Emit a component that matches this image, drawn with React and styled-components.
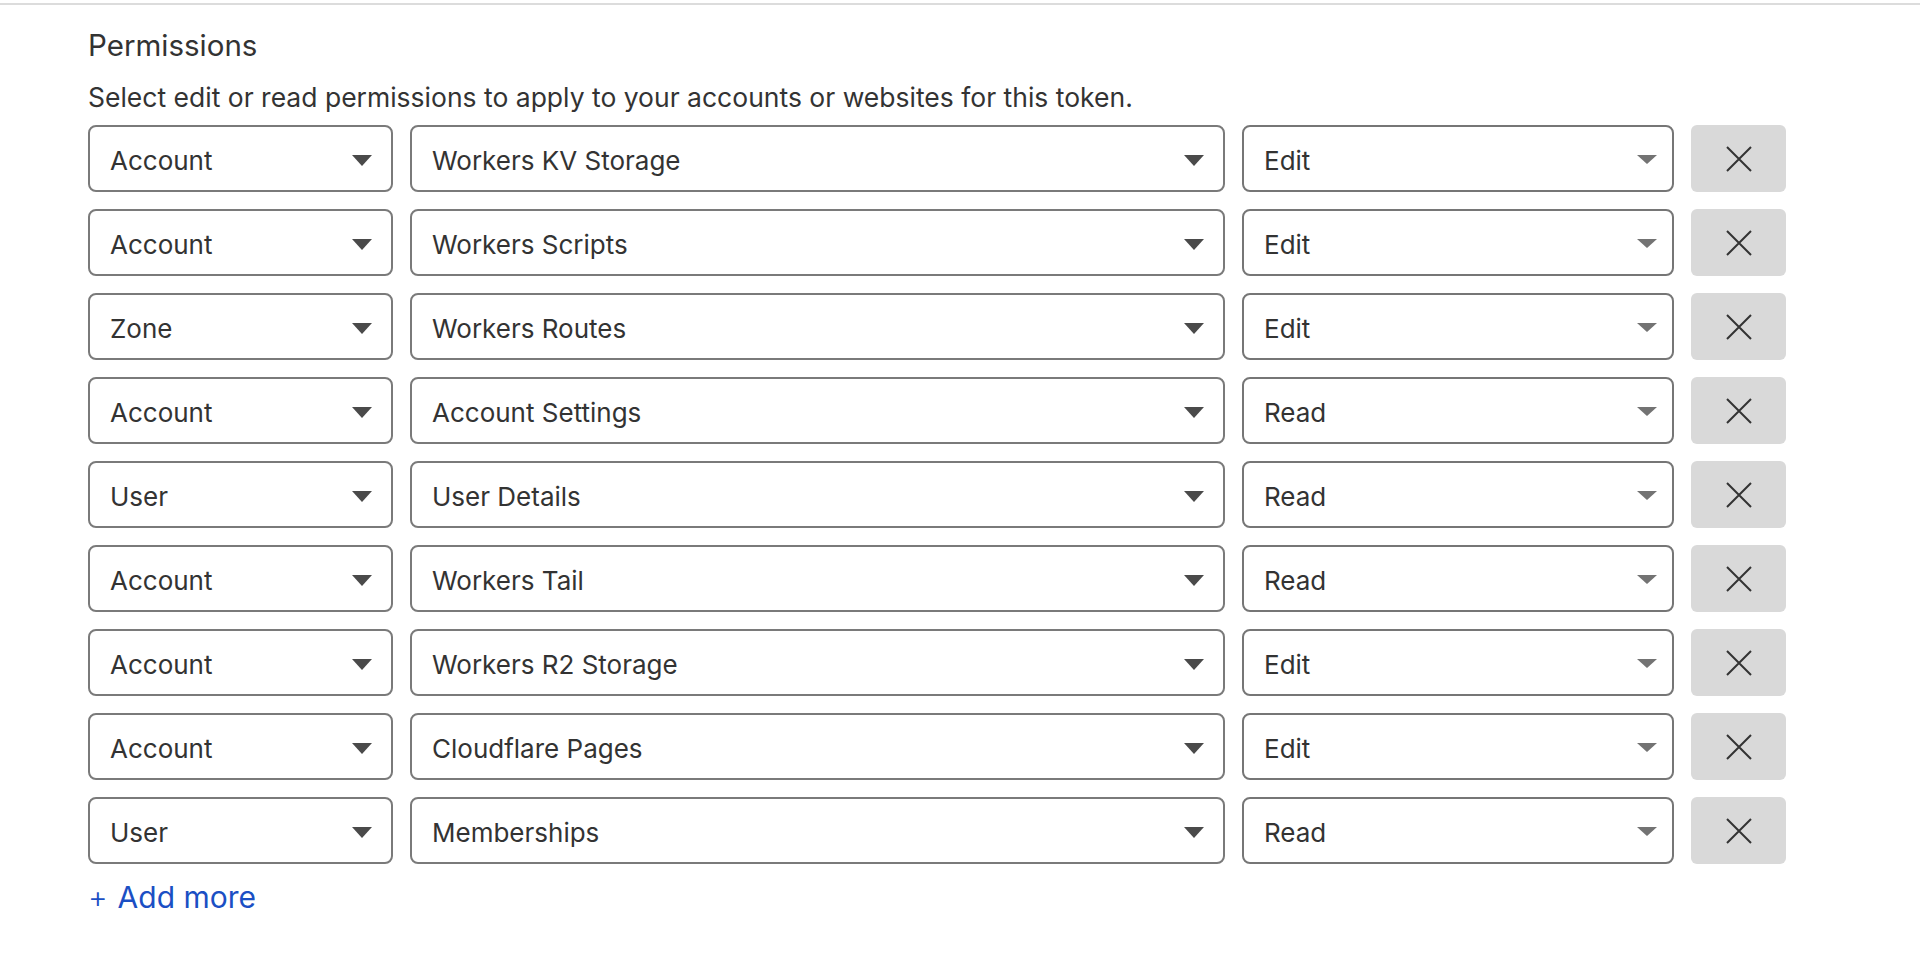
import React from "react";
import styled, { createGlobalStyle } from "styled-components";

const GlobalStyle = createGlobalStyle`
  html, body {
    margin: 0;
    padding: 0;
    background: #ffffff;
  }
  body {
    font-family: Inter, "Noto Sans", "Liberation Sans", sans-serif;
    color: #333333;
  }
`;

const Page = styled.div`
  border-top: 2px solid #dcdcdc;
  margin-top: 3px;
  padding: 20px 0 0 88px;
`;

const Title = styled.h2`
  margin: 0;
  font-size: 29.5px;
  font-weight: 400;
  line-height: 40px;
  color: #333;
`;

const Description = styled.p`
  margin: 16px 0 0;
  font-size: 26.5px;
  line-height: 32px;
  color: #333;
`;

const List = styled.div`
  margin-top: 12px;
  display: flex;
  flex-direction: column;
  gap: 17px;
`;

const Row = styled.div`
  display: grid;
  grid-template-columns: 305px 815px 432px 95px;
  column-gap: 17px;
  height: 67px;
`;

const Select = styled.div`
  box-sizing: border-box;
  height: 67px;
  border: 2px solid ${(p) => (p.$muted ? "#767676" : "#7a7a7a")};
  border-radius: 8px;
  display: flex;
  align-items: center;
  justify-content: space-between;
  padding: 0 ${(p) => (p.$muted ? "15px" : "19px")} 0 20px;
  font-size: 26px;
  color: #333;
  background: #fff;
`;

const Value = styled.span`
  padding-top: 4px;
`;

const Caret = styled.svg`
  flex: none;
  margin-top: 3px;
  display: block;
`;

const RemoveButton = styled.button`
  height: 67px;
  border: none;
  border-radius: 6px;
  background: #d9d9d9;
  display: flex;
  align-items: center;
  justify-content: center;
  padding: 0;
  cursor: pointer;
`;

const AddMore = styled.a`
  display: inline-flex;
  align-items: center;
  gap: 10px;
  margin-top: 13px;
  font-size: 30px;
  line-height: 40px;
  color: #1b4fc4;
  text-decoration: none;
  cursor: pointer;
`;

const Plus = styled.span`
  font-weight: 300;
`;

const rows = [
  ["Account", "Workers KV Storage", "Edit"],
  ["Account", "Workers Scripts", "Edit"],
  ["Zone", "Workers Routes", "Edit"],
  ["Account", "Account Settings", "Read"],
  ["User", "User Details", "Read"],
  ["Account", "Workers Tail", "Read"],
  ["Account", "Workers R2 Storage", "Edit"],
  ["Account", "Cloudflare Pages", "Edit"],
  ["User", "Memberships", "Read"],
];

const DarkCaret = () => (
  <Caret width="20" height="11" viewBox="0 0 20 11">
    <path d="M0 0 H20 L10 11 Z" fill="#4a4a4a" />
  </Caret>
);

const LightCaret = () => (
  <Caret width="20" height="10" viewBox="0 0 20 10">
    <path d="M0 0 H20 L10 9 Z" fill="#737373" />
  </Caret>
);

const CloseIcon = () => (
  <svg width="26" height="26" viewBox="0 0 26 26">
    <path d="M1 1 L25 25 M25 1 L1 25" stroke="#333" strokeWidth="2" fill="none" />
  </svg>
);

export default function App() {
  return (
    <>
      <GlobalStyle />
      <Page>
        <Title>Permissions</Title>
        <Description>
          Select edit or read permissions to apply to your accounts or websites for this token.
        </Description>
        <List>
          {rows.map(([scope, resource, level], i) => (
            <Row key={i}>
              <Select>
                <Value>{scope}</Value>
                <DarkCaret />
              </Select>
              <Select>
                <Value>{resource}</Value>
                <DarkCaret />
              </Select>
              <Select $muted>
                <Value>{level}</Value>
                <LightCaret />
              </Select>
              <RemoveButton aria-label="Remove">
                <CloseIcon />
              </RemoveButton>
            </Row>
          ))}
        </List>
        <AddMore>
          <Plus>+</Plus>
          <span>Add more</span>
        </AddMore>
      </Page>
    </>
  );
}
